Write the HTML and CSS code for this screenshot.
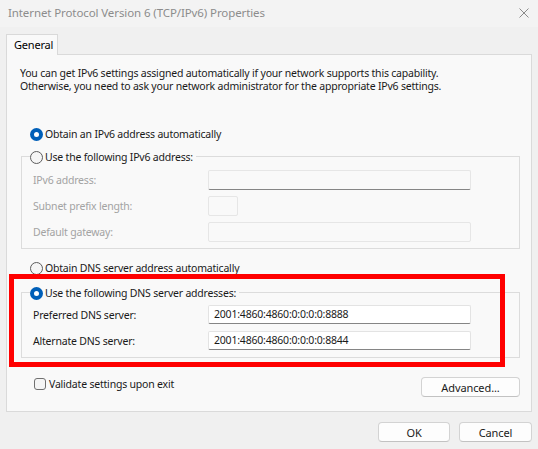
FILE: index.html
```html
<!DOCTYPE html>
<html lang="en">
<head>
    <meta charset="UTF-8">
    <meta name="viewport" content="width=device-width, initial-scale=1.0">
    <title>Internet Protocol Version 6 (TCP/IPv6) Properties</title>
    <link rel="stylesheet" href="styles.css">
</head>
<body>
    <div class="dialog">
        <div class="titlebar">
            <span class="title">Internet Protocol Version 6 (TCP/IPv6) Properties</span>
            <svg class="close" width="10" height="10" viewBox="0 0 10 10">
                <path d="M0.5 0.5 L9.5 9.5 M9.5 0.5 L0.5 9.5" stroke="#8a8a8a" stroke-width="1" fill="none"/>
            </svg>
        </div><!-- titlebar -->

        <div class="content">
            <div class="tabs">
                <div class="tab">General</div>
            </div>
            <div class="panel">
                <p class="intro">You can get IPv6 settings assigned automatically if your network supports this capability.<br>Otherwise, you need to ask your network administrator for the appropriate IPv6 settings.</p>

                <div class="radio-row first">
                    <span class="radio checked"></span>
                    <span>Obtain an IPv6 address automatically</span>
                </div>

                <div class="group group-ip">
                    <div class="legend">
                        <span class="radio"></span>
                        <span>Use the following IPv6 address:</span>
                    </div>
                    <div class="field disabled">
                        <span class="label">IPv6 address:</span>
                        <span class="input wide underline"></span>
                    </div>
                    <div class="field disabled">
                        <span class="label">Subnet prefix length:</span>
                        <span class="input small"></span>
                    </div>
                    <div class="field disabled">
                        <span class="label">Default gateway:</span>
                        <span class="input wide"></span>
                    </div>
                </div><!-- group-ip -->

                <div class="radio-row dns-auto">
                    <span class="radio"></span>
                    <span>Obtain DNS server address automatically</span>
                </div>

                <div class="group group-dns">
                    <div class="legend">
                        <span class="radio checked"></span>
                        <span>Use the following DNS server addresses:</span>
                    </div>
                    <div class="field">
                        <span class="label">Preferred DNS server:</span>
                        <span class="input wide underline enabled">2001:4860:4860:0:0:0:0:8888</span>
                    </div>
                    <div class="field">
                        <span class="label">Alternate DNS server:</span>
                        <span class="input wide underline enabled">2001:4860:4860:0:0:0:0:8844</span>
                    </div>
                </div><!-- group-dns -->

                <div class="bottom-row">
                    <div class="check-row">
                        <span class="checkbox"></span>
                        <span>Validate settings upon exit</span>
                    </div>
                    <button class="btn advanced">Advanced...</button>
                </div>
            </div><!-- panel -->

            <div class="actions">
                <button class="btn">OK</button>
                <button class="btn">Cancel</button>
            </div>
        </div><!-- content -->

        <div class="highlight"></div>
    </div><!-- dialog -->
</body>
</html>
```

FILE: styles.css
```css
html, body{
    margin: 0;
    padding: 0;
    width: 538px;
    height: 449px;
    overflow: hidden;
}
body{
    background: #f0f0f0;
    font-family: "Noto Sans", "Open Sans", sans-serif;
    font-size: 10.5px;
    letter-spacing: -0.2px;
    color: #1a1a1a;
}
.dialog{
    position: relative;
    width: 538px;
    height: 449px;
}
.titlebar{
    height: 27px;
    background: #f3f3f3;
    display: flex;
    align-items: center;
    justify-content: space-between;
    padding: 0 9px 2px 8px;
    box-sizing: border-box;
}
.title{
    font-size: 11.5px;
    letter-spacing: -0.1px;
    color: #8c8c8c;
}
.content{
    padding: 7px 6px 0 6px;
}
.tabs{
    display: flex;
    height: 20px;
    position: relative;
    z-index: 1;
}
.tab{
    width: 52px;
    height: 21px;
    box-sizing: border-box;
    border: 1px solid #d9d9d9;
    border-bottom: none;
    background: #f9f9f9;
    padding-left: 7px;
    line-height: 19px;
    font-size: 11px;
    color: #000;
}
.panel{
    height: 358px;
    box-sizing: border-box;
    border: 1px solid #dadada;
    background: #f9f9f9;
    padding: 0 11px 0 0;
}
.intro{
    margin: 0;
    padding: 12px 0 0 13px;
    line-height: 13px;
    white-space: nowrap;
}
.radio-row, .legend, .check-row{
    display: flex;
    align-items: center;
    gap: 2px;
    height: 16px;
    white-space: nowrap;
}
.radio-row{
    padding-left: 23px;
}
.radio-row.first{
    margin-top: 33px;
}
.radio-row.dns-auto{
    margin-top: 11px;
}
.radio{
    width: 13px;
    height: 13px;
    box-sizing: border-box;
    border-radius: 50%;
    border: 1px solid #5c5c5c;
    background: #f5f5f5;
    flex-shrink: 0;
    position: relative;
}
.radio.checked{
    border: none;
    background: #005fb8;
}
.radio.checked::after{
    content: "";
    position: absolute;
    left: 4px;
    top: 4px;
    width: 5px;
    height: 5px;
    border-radius: 50%;
    background: #fff;
}
.group{
    margin-left: 14px;
    border: 1px solid #dcdcdc;
    padding-bottom: 6px;
}
.group-ip{
    margin-top: 14px;
}
.group-dns{
    margin-top: 16px;
    padding-bottom: 7px;
}
.legend{
    width: fit-content;
    margin: -8px 0 0 8px;
    padding-right: 3px;
    background: #f9f9f9;
}
.field{
    display: flex;
    align-items: center;
    height: 20px;
    margin-top: 6px;
    padding-left: 11px;
}
.group-ip .legend + .field{
    margin-top: 5px;
}
.group-dns .field{
    height: 19px;
    margin-top: 7px;
}
.group-dns .legend + .field{
    margin-top: 4px;
}
.field.disabled{
    color: #a3a3a3;
}
.label{
    width: 175px;
}
.input{
    height: 100%;
    box-sizing: border-box;
    border: 1px solid #e6e6e6;
    background: #f9f9f9;
    border-radius: 2px;
}
.input.wide{
    width: 263px;
}
.input.small{
    width: 30px;
}
.input.underline{
    border-bottom-color: #858585;
}
.input.enabled{
    background: #fff;
    border-color: #e3e3e3;
    border-bottom-color: #858585;
    padding-left: 5px;
    line-height: 17px;
    color: #1a1a1a;
}
.bottom-row{
    display: flex;
    justify-content: space-between;
    align-items: flex-start;
    margin-top: 19px;
    padding-left: 27px;
}
.check-row{
    gap: 3px;
    height: 13px;
}
.checkbox{
    width: 12px;
    height: 12px;
    box-sizing: border-box;
    border: 1px solid #707070;
    border-radius: 3px;
    background: #f5f5f5;
}
.btn{
    font-family: inherit;
    font-size: 11px;
    letter-spacing: -0.1px;
    color: #1a1a1a;
    height: 20px;
    padding: 0;
    border: 1px solid #d3d3d3;
    border-bottom-color: #c2c2c2;
    border-radius: 4px;
    background: #fdfdfd;
}
.btn.advanced{
    width: 99px;
}
.actions{
    display: flex;
    justify-content: flex-end;
    gap: 9px;
    margin-top: 10px;
}
.actions .btn{
    width: 72px;
}
.actions .btn + .btn{
    width: 73px;
}
.highlight{
    position: absolute;
    left: 9px;
    top: 274px;
    width: 496px;
    height: 93px;
    box-sizing: border-box;
    border: 5px solid #ff0000;
}
```
